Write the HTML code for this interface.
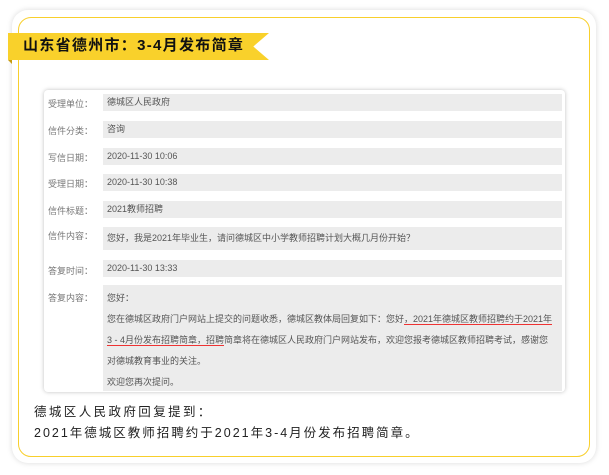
<!DOCTYPE html>
<html><head><meta charset="utf-8"><style>
body{margin:0;width:609px;height:475px;background:#fff;position:relative;overflow:hidden;font-family:"Liberation Sans","Noto Sans CJK SC",sans-serif}
.outer{position:absolute;left:12px;top:10px;width:584px;height:453px;border-radius:16px;background:#fff;box-shadow:0 0 6px rgba(0,0,0,.15)}
.yb{position:absolute;left:18px;top:17px;width:570px;height:438px;border:1.5px solid #f8cf2c;border-radius:13px}
.banner{position:absolute;left:8px;top:33px;width:261px;height:27px;background:#f9d12b;clip-path:polygon(0 0,100% 0,94% 50%,100% 100%,0 100%)}
.fold{position:absolute;left:8px;top:60px;width:0;height:0;border-top:4px solid #c79c10;border-left:4px solid transparent}
.title{position:absolute;left:23px;top:36px;font-size:15px;font-weight:bold;color:#111;letter-spacing:1.3px;line-height:20px}
.shot{position:absolute;left:44px;top:90px;width:521px;height:302px;background:#fff;border-radius:4px;box-shadow:0 0 4px rgba(0,0,0,.25);font-size:9px;color:#555}
.lab{position:absolute;left:4px;color:#777}
.f{position:absolute;left:59px;width:459px;background:#ececec;padding-left:4px;box-sizing:border-box;line-height:17px}
.r{line-height:21px;padding-top:3px}
.u{border-bottom:1.5px solid #e33}
.bt{position:absolute;left:34px;font-size:12.5px;color:#222;letter-spacing:2px}
</style></head><body>
<div class="outer"></div><div class="yb"></div>
<div class="banner"></div><div class="fold"></div>
<div class="title">山东省德州市：3-4月发布简章</div>
<div class="shot">
<div class="lab" style="top:7px">受理单位：</div><div class="f" style="top:4px">德城区人民政府</div>
<div class="lab" style="top:34px">信件分类：</div><div class="f" style="top:31px">咨询</div>
<div class="lab" style="top:61px">写信日期：</div><div class="f" style="top:58px">2020-11-30 10:06</div>
<div class="lab" style="top:87px">受理日期：</div><div class="f" style="top:84px">2020-11-30 10:38</div>
<div class="lab" style="top:114px">信件标题：</div><div class="f" style="top:111px">2021教师招聘</div>
<div class="lab" style="top:139px">信件内容：</div><div class="f" style="top:137px;height:23px;line-height:23px">您好，我是2021年毕业生，请问德城区中小学教师招聘计划大概几月份开始？</div>
<div class="lab" style="top:174px">答复时间：</div><div class="f" style="top:170px">2020-11-30 13:33</div>
<div class="lab" style="top:201px">答复内容：</div><div class="f r" style="top:195px;height:106px">您好：<br>您在德城区政府门户网站上提交的问题收悉，德城区教体局回复如下：您好<span class="u">，2021年德城区教师招聘约于2021年<br>3 - 4月份发布招聘简章，招聘</span>简章将在德城区人民政府门户网站发布，欢迎您报考德城区教师招聘考试，感谢您<br>对德城教育事业的关注。<br>欢迎您再次提问。</div>
</div>
<div class="bt" style="top:401px;letter-spacing:2.4px">德城区人民政府回复提到：</div>
<div class="bt" style="top:422px">2021年德城区教师招聘约于2021年3-4月份发布招聘简章。</div>
</body></html>
